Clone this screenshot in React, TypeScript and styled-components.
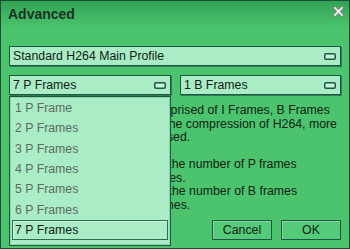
import styled, { createGlobalStyle } from "styled-components";

const GlobalStyle = createGlobalStyle`
  html, body {
    margin: 0;
    padding: 0;
    background: #4cc46e;
  }
  body {
    font-family: "Liberation Sans", Arial, sans-serif;
    font-size: 12px;
    color: #0f1d14;
  }
`;

const pFrames = [
  "1 P Frame",
  "2 P Frames",
  "3 P Frames",
  "4 P Frames",
  "5 P Frames",
  "6 P Frames",
  "7 P Frames",
];

const description = [
  "An H264 video stream is comprised of I Frames, B Frames",
  "and P Frames. To maximise the compression of H264, more",
  "B frames and P frames are used.",
  "",
  "The P Frame option controls the number of P frames",
  "to be inserted between I frames.",
  "The B Frame option controls the number of B frames",
  "to be inserted between P frames.",
];

const DropIcon = () => (
  <svg width="12" height="7" viewBox="0 0 12 7">
    <rect x="0.75" y="0.75" width="10.5" height="5.5" rx="1.2" fill="#c4f3d8" stroke="#1d5643" strokeWidth="1.5" />
  </svg>
);

const CloseIcon = () => (
  <svg width="11" height="11" viewBox="0 0 11 11">
    <path d="M2 2 L9 9 M9 2 L2 9" stroke="#7d8582" strokeWidth="3.6" strokeLinecap="square" />
    <path d="M2 2 L9 9 M9 2 L2 9" stroke="#ffffff" strokeWidth="1.6" strokeLinecap="square" />
  </svg>
);

const App = () => {
  const selected = 6;
  return (
    <>
      <GlobalStyle />
      <Window>
        <TitleBar>
          <Title>Advanced</Title>
          <CloseButton>
            <CloseIcon />
          </CloseButton>
        </TitleBar>
        <Body>
          <Combo>
            <ComboText>Standard H264 Main Profile</ComboText>
            <DropIcon />
          </Combo>
          <ComboRow>
            <ComboWrap>
              <Combo>
                <ComboText>7 P Frames</ComboText>
                <DropIcon />
              </Combo>
              <DropList>
                {pFrames.map((f, i) => (
                  <ListItem key={f} $selected={i === selected}>
                    {f}
                  </ListItem>
                ))}
              </DropList>
            </ComboWrap>
            <Combo $grow>
              <ComboText>1 B Frames</ComboText>
              <DropIcon />
            </Combo>
          </ComboRow>
          <Description>
            {description.map((line, i) => (
              <Line key={i}>{line || "\u00a0"}</Line>
            ))}
          </Description>
          <Buttons>
            <Button>Cancel</Button>
            <Button>OK</Button>
          </Buttons>
        </Body>
      </Window>
    </>
  );
};

const Window = styled.div`
  width: 350px;
  height: 249px;
  box-sizing: border-box;
  border: 1px solid #1b4d36;
  background: #4cc46e;
  display: flex;
  flex-direction: column;
  overflow: hidden;
`;

const TitleBar = styled.div`
  height: 28px;
  flex-shrink: 0;
  display: flex;
  align-items: flex-start;
  justify-content: space-between;
  padding: 5px 5px 0 7px;
  box-sizing: border-box;
  background: linear-gradient(to bottom, #31a355 0%, #42b663 55%, #4cc46e 100%);
`;

const Title = styled.div`
  font-size: 14px;
  font-weight: bold;
  color: #1a3325;
  line-height: 16px;
`;

const CloseButton = styled.div`
  width: 11px;
  height: 11px;
`;

const Body = styled.div`
  flex: 1;
  display: flex;
  flex-direction: column;
  padding: 17px 8px 8px 8px;
`;

const ComboRow = styled.div`
  display: flex;
  gap: 9px;
  margin-top: 9px;
`;

const ComboWrap = styled.div`
  position: relative;
  width: 162px;
  display: flex;
  flex-direction: column;
`;

const Combo = styled.div<{ $grow?: boolean }>`
  flex: ${(p) => (p.$grow ? 1 : "none")};
  height: 20px;
  box-sizing: border-box;
  border: 1px solid #1d5643;
  box-shadow: 1px 1px 0 #2f7d56;
  background: #a9ecc6;
  display: flex;
  align-items: center;
  justify-content: space-between;
  padding: 0 4px 0 3px;
`;

const ComboText = styled.span`
  font-size: 12.3px;
  color: #0f1d14;
  white-space: nowrap;
`;

const DropList = styled.div`
  position: absolute;
  top: 21px;
  left: 0;
  width: 162px;
  height: 150px;
  box-sizing: border-box;
  border: 1px solid #1d5643;
  box-shadow: inset 1px 1px 0 #86d6a6, inset -1px -1px 0 #86d6a6;
  background: #a9ecc6;
  padding: 1px 2px;
  z-index: 2;
`;

const ListItem = styled.div<{ $selected?: boolean }>`
  height: 20.33px;
  box-sizing: border-box;
  display: flex;
  align-items: center;
  padding-left: ${(p) => (p.$selected ? "2px" : "3px")};
  font-size: 12.3px;
  color: ${(p) => (p.$selected ? "#0f1d14" : "#5d6b62")};
  border: ${(p) => (p.$selected ? "1px solid #2d6e52" : "none")};
  box-shadow: ${(p) => (p.$selected ? "inset 1px 1px 0 #d2f7e2" : "none")};
  white-space: nowrap;
`;

const Description = styled.div`
  margin-top: 9px;
  padding-left: 1px;
  flex: 1;
`;

const Line = styled.div`
  font-size: 12.3px;
  line-height: 13.5px;
  color: #0f1d14;
  white-space: nowrap;
`;

const Buttons = styled.div`
  display: flex;
  justify-content: flex-end;
  gap: 9px;
`;

const Button = styled.div`
  width: 60px;
  height: 20px;
  box-sizing: border-box;
  border: 1px solid #1d5643;
  box-shadow: inset 1px 1px 0 #7fdc9d;
  background: #55ca78;
  display: flex;
  align-items: center;
  justify-content: center;
  font-size: 12.3px;
  color: #0f1d14;
`;

export default App;
